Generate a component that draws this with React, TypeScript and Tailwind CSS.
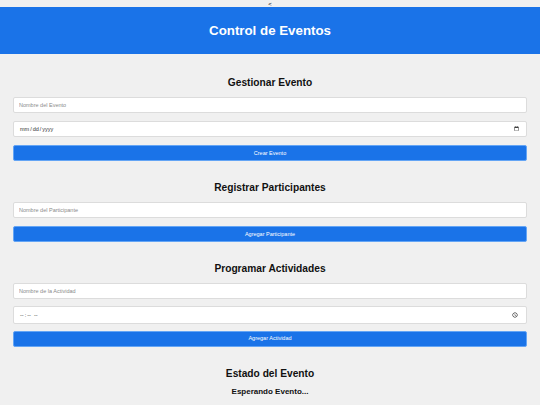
const inputClass =
  "block h-[16px] w-full rounded-[2px] border border-[#dcdcdc] bg-white px-[5px] text-[5.5px] text-[#333] placeholder:text-[#8a8a8a] outline-none"

const buttonClass =
  "block h-[16px] w-full rounded-[2px] border border-[#64a5f5] bg-[#1a73e8] text-[5.5px] text-white"

function SectionTitle({ children }: { children: string }) {
  return (
    <h2 className="h-[15px] text-center text-[10.2px] font-bold leading-[15px] text-[#111]">
      {children}
    </h2>
  )
}

export default function App() {
  return (
    <div
      className="min-h-[405px] w-full bg-[#f0f0f0]"
      style={{ fontFamily: '"Liberation Sans", Arial, sans-serif' }}
    >
      <div className="flex h-[7px] items-center justify-center text-[6px] leading-none text-black">
        &lt;
      </div>

      <header className="flex h-[47px] items-center justify-center bg-[#1a73e8]">
        <h1 className="text-[13.3px] font-bold text-white">Control de Eventos</h1>
      </header>

      <main className="px-[13px] pt-[21px]">
        <section>
          <SectionTitle>Gestionar Evento</SectionTitle>
          <div className="mt-[7px] flex flex-col gap-[8px]">
            <input className={inputClass} placeholder="Nombre del Evento" />
            <input type="date" className={inputClass} />
            <button type="button" className={buttonClass}>
              Crear Evento
            </button>
          </div>
        </section>

        <section className="mt-[19px]">
          <SectionTitle>Registrar Participantes</SectionTitle>
          <div className="mt-[7px] flex flex-col gap-[8px]">
            <input className={inputClass} placeholder="Nombre del Participante" />
            <button type="button" className={buttonClass}>
              Agregar Participante
            </button>
          </div>
        </section>

        <section className="mt-[19px]">
          <SectionTitle>Programar Actividades</SectionTitle>
          <div className="mt-[7px] flex flex-col gap-[7px]">
            <input className={inputClass} placeholder="Nombre de la Actividad" />
            <input type="time" className={`${inputClass} !h-[17.5px]`} />
            <button type="button" className={buttonClass}>
              Agregar Actividad
            </button>
          </div>
        </section>

        <section className="mt-[19px] pb-[6px]">
          <SectionTitle>Estado del Evento</SectionTitle>
          <p className="mt-[5px] text-center text-[8px] font-bold leading-[12px] text-[#111]">
            Esperando Evento...
          </p>
        </section>
      </main>
    </div>
  )
}
